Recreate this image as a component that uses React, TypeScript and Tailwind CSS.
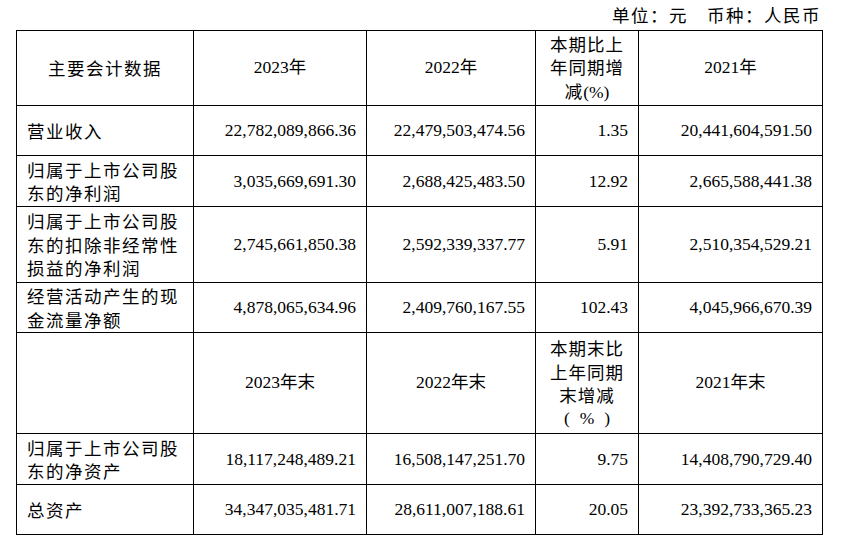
import React from "react";

const FONT = { fontFamily: '"Liberation Serif", "Noto Sans CJK SC", serif' };

type Row = {
  label: string[];
  vals: string[];
  h: string;
};

const cn = "font-['Noto_Sans_CJK_SC',sans-serif] text-[17.5px] tracking-[1.5px]";
const serif = "font-['Liberation_Serif',serif] tracking-normal";

function Label({ lines }: { lines: string[] }) {
  return (
    <div className={cn + " leading-[23.5px] text-left"}>
      {lines.map((l, i) => (
        <div key={i}>{l}</div>
      ))}
    </div>
  );
}

function Head({ lines }: { lines: string[] }) {
  return (
    <div className="leading-[23.5px] text-center text-[17.5px]">
      {lines.map((l, i) => (
        <div key={i}>{l}</div>
      ))}
    </div>
  );
}

const rows1: Row[] = [
  { label: ["营业收入"], vals: ["22,782,089,866.36", "22,479,503,474.56", "1.35", "20,441,604,591.50"], h: "h-[50px]" },
  { label: ["归属于上市公司股", "东的净利润"], vals: ["3,035,669,691.30", "2,688,425,483.50", "12.92", "2,665,588,441.38"], h: "h-[51px]" },
  { label: ["归属于上市公司股", "东的扣除非经常性", "损益的净利润"], vals: ["2,745,661,850.38", "2,592,339,337.77", "5.91", "2,510,354,529.21"], h: "h-[76px]" },
  { label: ["经营活动产生的现", "金流量净额"], vals: ["4,878,065,634.96", "2,409,760,167.55", "102.43", "4,045,966,670.39"], h: "h-[50px]" },
];

const rows2: Row[] = [
  { label: ["归属于上市公司股", "东的净资产"], vals: ["18,117,248,489.21", "16,508,147,251.70", "9.75", "14,408,790,729.40"], h: "h-[51px]" },
  { label: ["总资产"], vals: ["34,347,035,481.71", "28,611,007,188.61", "20.05", "23,392,733,365.23"], h: "h-[50px]" },
];

const td = "border border-black align-middle p-0";

function DataRow({ r }: { r: Row }) {
  return (
    <tr className={r.h}>
      <td className={td + " pl-[10px]"}>
        <Label lines={r.label} />
      </td>
      {r.vals.map((v, i) => (
        <td key={i} className={td + " text-right pr-[10px] text-[17.5px]"}>
          {v}
        </td>
      ))}
    </tr>
  );
}

export default function App() {
  return (
    <div className="w-[842px] h-[548px] bg-white text-black" style={FONT}>
      <div className="h-[30px] flex items-center justify-end pr-[21px]">
        <span className={cn + " leading-none"}>单位：元　币种：人民币</span>
      </div>
      <table className="ml-[16px] w-[806px] border-collapse table-fixed">
        <colgroup>
          <col className="w-[177px]" />
          <col className="w-[173px]" />
          <col className="w-[169px]" />
          <col className="w-[103px]" />
          <col className="w-[184px]" />
        </colgroup>
        <tbody>
          <tr className="h-[75px]">
            <td className={td}>
              <div className={cn + " text-center"}>主要会计数据</div>
            </td>
            <td className={td}><Head lines={["2023年"]} /></td>
            <td className={td}><Head lines={["2022年"]} /></td>
            <td className={td}>
              <div className={cn + " leading-[23.5px] text-center tracking-[1px]"}>
                <div>本期比上</div>
                <div>年同期增</div>
                <div>
                  减<span className={serif + " text-[17.5px]"}>(%)</span>
                </div>
              </div>
            </td>
            <td className={td}><Head lines={["2021年"]} /></td>
          </tr>
          {rows1.map((r, i) => (
            <DataRow key={i} r={r} />
          ))}
          <tr className="h-[101px]">
            <td className={td}></td>
            <td className={td}><Head lines={["2023年末"]} /></td>
            <td className={td}><Head lines={["2022年末"]} /></td>
            <td className={td}>
              <div className={cn + " leading-[23.5px] text-center tracking-[1px]"}>
                <div>本期末比</div>
                <div>上年同期</div>
                <div>末增减</div>
                <div className={serif + " text-[17.5px]"}>
                  (<span className="mx-[10px]">%</span>)
                </div>
              </div>
            </td>
            <td className={td}><Head lines={["2021年末"]} /></td>
          </tr>
          {rows2.map((r, i) => (
            <DataRow key={i} r={r} />
          ))}
        </tbody>
      </table>
    </div>
  );
}
